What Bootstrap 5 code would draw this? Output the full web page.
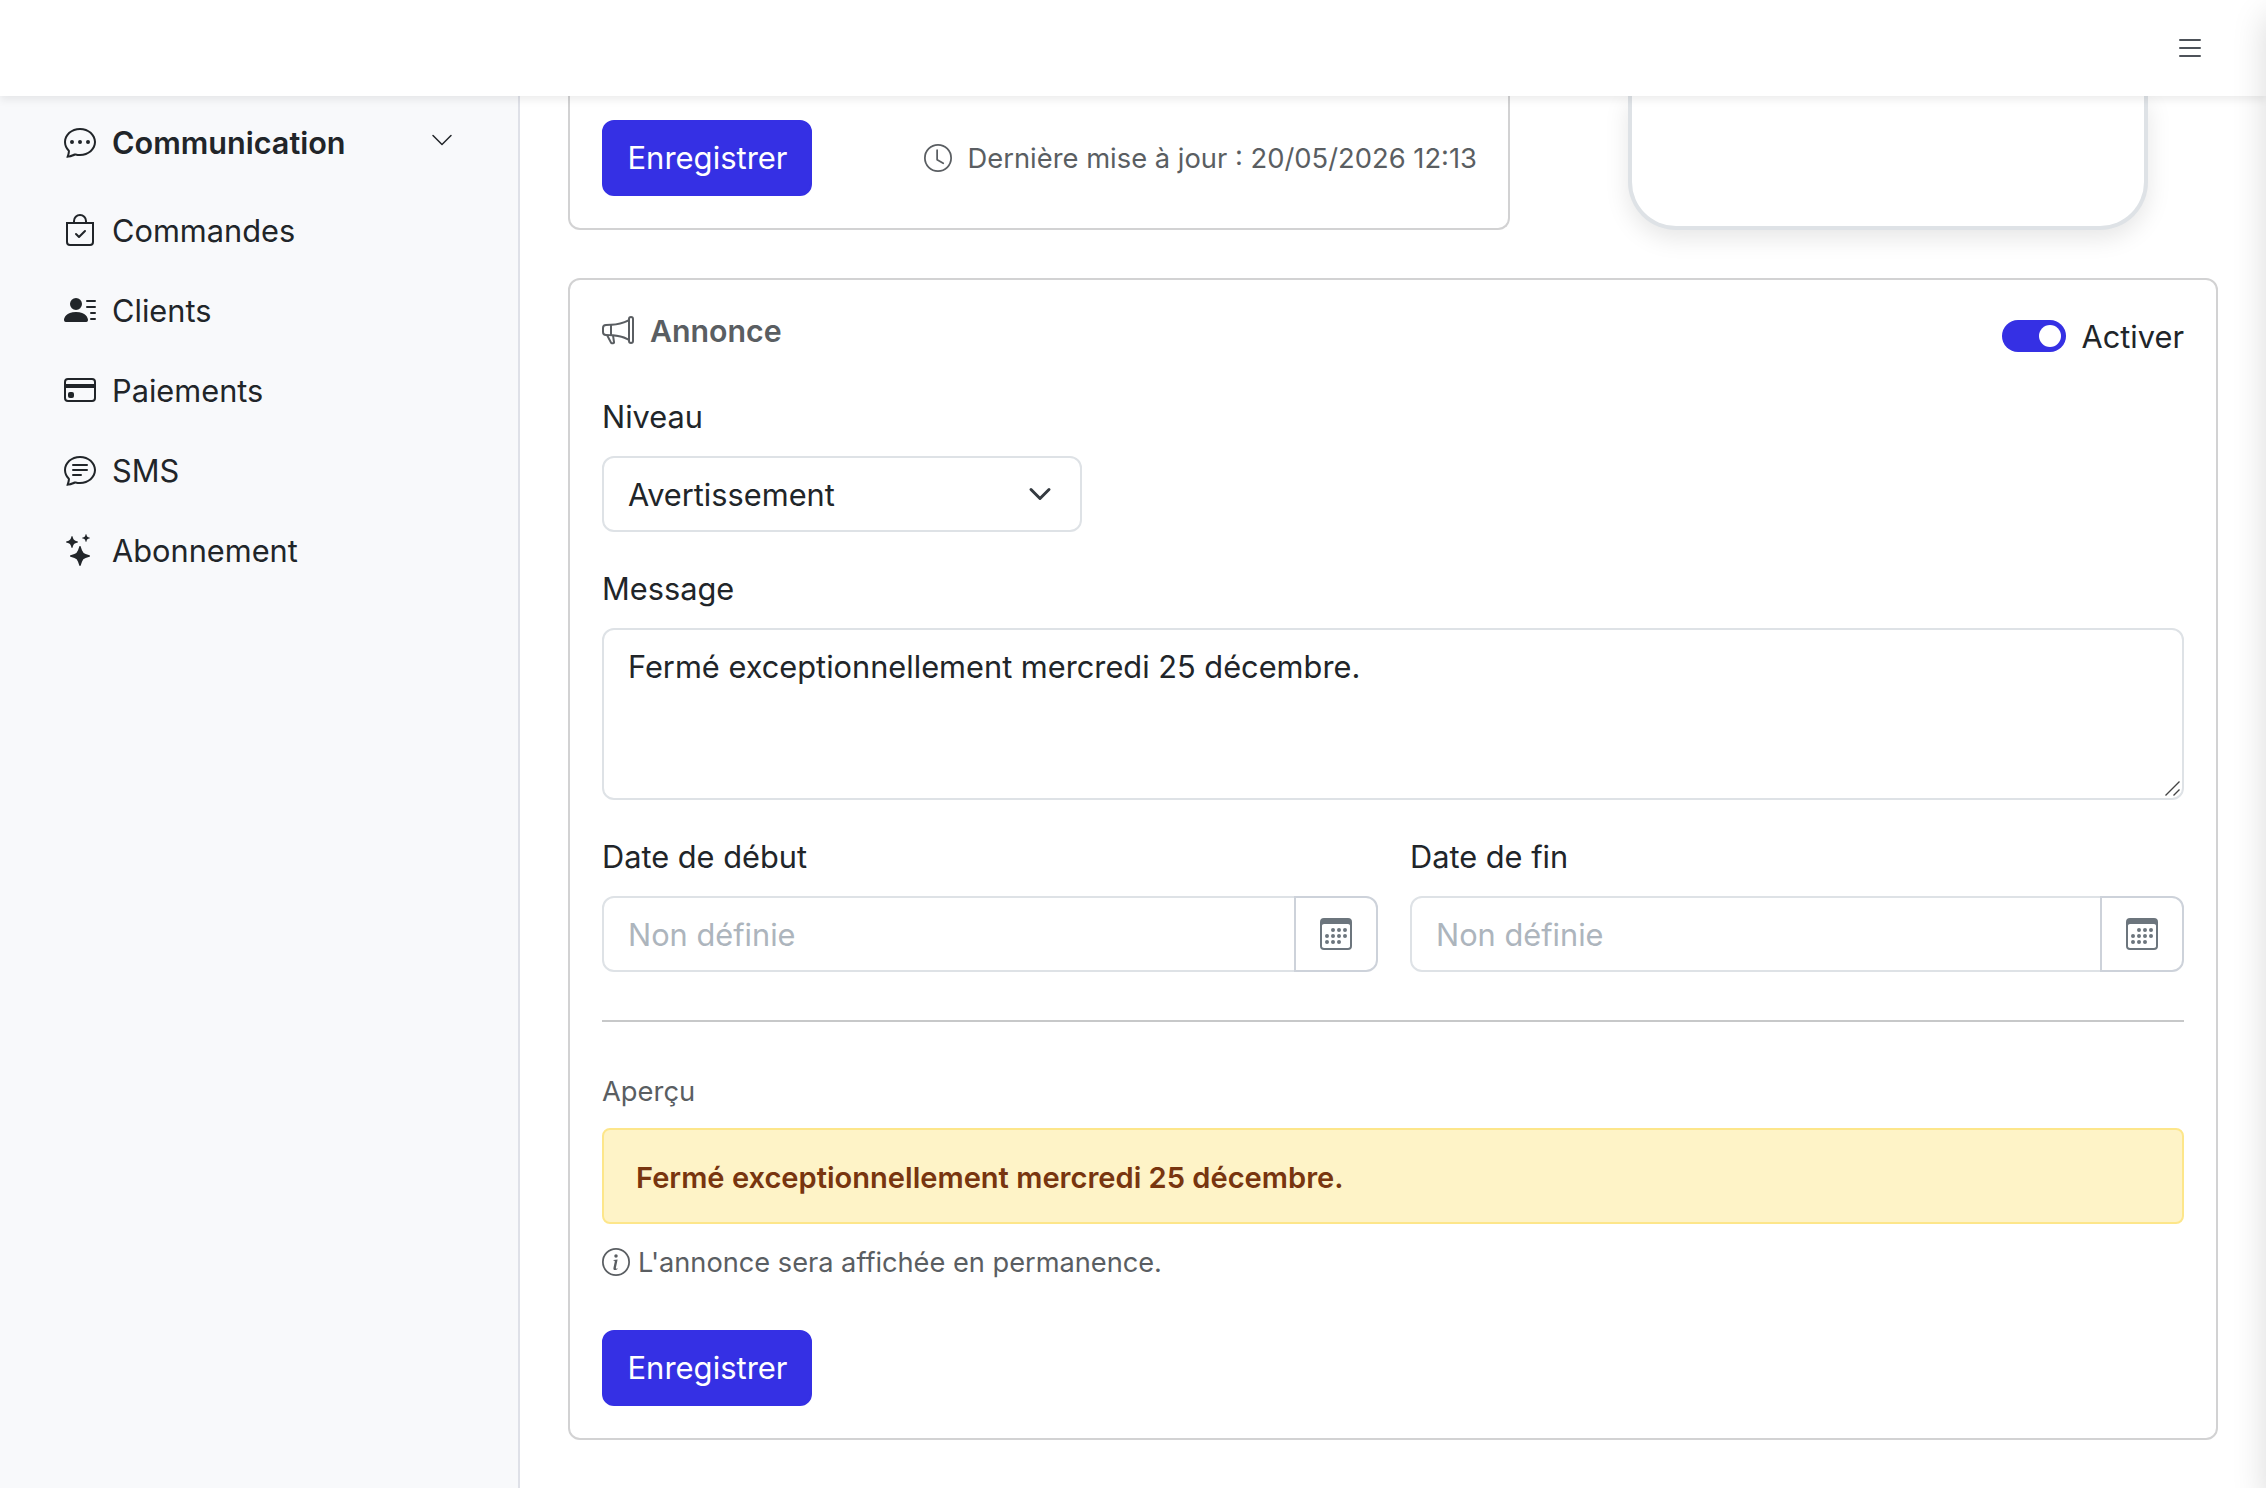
<!DOCTYPE html>
<html lang="fr">
<head>
<meta charset="utf-8">
<title>Annonce</title>
<link href="https://cdn.jsdelivr.net/npm/bootstrap@5.3.0/dist/css/bootstrap.min.css" rel="stylesheet">
<style>
:root{--brand:#3530e4;--text-size:30.75px}
html{font-size:32px}
body{font-family:Inter,"Liberation Sans",sans-serif;font-size:var(--text-size);line-height:1.5rem;overflow:hidden;height:1488px}
svg{fill:currentColor;flex:none;display:block}
.ic{width:32px;height:32px}
.ic-sm{width:28px;height:28px}
.t{padding-top:2px}
.topbar{height:96px;padding:0 60px;z-index:1030;box-shadow:0 4px 8px rgba(0,0,0,.075);color:#4d5259}
.shell{height:1392px}
.sidebar{width:520px;background:#f8f9fb;border-right:2px solid #dfe1e8;padding:6px 64px}
.side-item{height:80px;color:#212529;gap:16px}
.side-item.open{margin-bottom:8px;font-weight:600;font-size:30.6px}
.chev{width:24px;height:24px;margin-bottom:4px}
.content{padding:0 48px}
.panel{border:2px solid #d2d2d3;border-radius:12px;background:#fff;padding:32px}
.panel-top{width:942px;height:134px;border-top:0;border-radius:0 0 12px 12px;padding-top:24px}
.panel-main{margin-top:48px}
.phone{width:520px;height:134px;margin-right:70px;border:4px solid #dee2e6;border-top:0;border-radius:0 0 48px 48px;box-shadow:0 8px 24px rgba(0,0,0,.1)}
.btn-brand{--bs-btn-color:#fff;--bs-btn-bg:var(--brand);--bs-btn-border-color:var(--brand);border-width:2px;border-radius:12px;font-size:31px;line-height:46px;padding:13px 0 13px 1px;width:210px;height:76px}
.save{margin-top:46px;display:block}
.muted{color:#5a5e62}
.fine{font-size:27.35px;line-height:42px}
.stamp{height:76px;margin-right:-1px}
.preview-label{padding-top:2px;line-height:40px}
.head{height:80px}
.head-title{font-weight:600;font-size:30.3px;height:36px}
.toggle-label{line-height:46px}
.switch{width:64px;height:32px;border-radius:16px;background:var(--brand);padding:5px}
.knob{width:22px;height:22px;border-radius:50%;background:#fff}
.form-label{margin-bottom:16px;line-height:46px;display:block;width:max-content}
.form-control,.form-select{border:2px solid #dee2e6;border-radius:12px;font-size:var(--text-size);line-height:48px;padding:13px 24px 11px;color:#212529}
.form-control::placeholder{color:#adb5bd}
.form-select{width:480px;background-size:32px 24px;background-position:right 24px center}
textarea.form-control{resize:none;display:block;height:172px;overflow:hidden}
.grip{position:absolute;right:2px;bottom:3px;width:18px;height:18px}
.date-field{width:776px}
.date-field+.date-field{width:774px}
.cal{width:84px;border:2px solid #cdd2da;border-radius:12px;color:#6c757d;padding:0 24px;background:#fff}
.input-group>.cal{margin-left:-2px!important}
.rule{height:2px;background:#c7c8c9;margin:48px 0}
.notice{height:96px;background:#fef3c7;border:2px solid #fde68a;border-radius:8px;color:#78350f;font-weight:600;font-size:29.08px;padding:2px 32px 0}
.hint{font-size:27.23px;height:44px;gap:8px}
.hint .t{letter-spacing:-.02px}
.drawer{position:fixed;top:0;left:100%;width:600px;height:100%;z-index:1045;background:#fff;box-shadow:0 16px 32px rgba(0,0,0,.15)}
</style>
</head>
<body class="bg-white">
<nav class="topbar bg-white d-flex align-items-center justify-content-end position-relative">
  <svg class="ic" viewBox="0 0 16 16"><path d="M2.5 12a.5.5 0 0 1 .5-.5h10a.5.5 0 0 1 0 1H3a.5.5 0 0 1-.5-.5m0-4a.5.5 0 0 1 .5-.5h10a.5.5 0 0 1 0 1H3a.5.5 0 0 1-.5-.5m0-4a.5.5 0 0 1 .5-.5h10a.5.5 0 0 1 0 1H3a.5.5 0 0 1-.5-.5"/></svg>
</nav>
<div class="shell d-flex">
  <aside class="sidebar flex-shrink-0">
    <div class="side-item open d-flex align-items-center">
      <svg class="ic" viewBox="0 0 16 16"><path d="M5 8a1 1 0 1 1-2 0 1 1 0 0 1 2 0m4 0a1 1 0 1 1-2 0 1 1 0 0 1 2 0m3 1a1 1 0 1 0 0-2 1 1 0 0 0 0 2"/><path d="m2.165 15.803.02-.004c1.83-.363 2.948-.842 3.468-1.105A9 9 0 0 0 8 15c4.418 0 8-3.134 8-7s-3.582-7-8-7-8 3.134-8 7c0 1.76.743 3.37 1.97 4.6a10.4 10.4 0 0 1-.524 2.318l-.003.011a11 11 0 0 1-.244.637c-.079.186.074.394.273.362a22 22 0 0 0 .693-.125m.8-3.108a1 1 0 0 0-.287-.801C1.618 10.83 1 9.468 1 8c0-3.192 3.004-6 7-6s7 2.808 7 6-3.004 6-7 6a8 8 0 0 1-2.088-.272 1 1 0 0 0-.711.074c-.387.196-1.24.57-2.634.893a11 11 0 0 0 .398-2"/></svg>
      <span class="t me-auto">Communication</span>
      <svg class="chev" viewBox="0 0 16 16"><path d="M1.646 4.646a.5.5 0 0 1 .708 0L8 10.293l5.646-5.647a.5.5 0 0 1 .708.708l-6 6a.5.5 0 0 1-.708 0l-6-6a.5.5 0 0 1 0-.708"/></svg>
    </div>
    <div class="side-item d-flex align-items-center">
      <svg class="ic" viewBox="0 0 16 16"><path d="M10.854 8.146a.5.5 0 0 1 0 .708l-3 3a.5.5 0 0 1-.708 0l-1.5-1.5a.5.5 0 1 1 .708-.708L7.5 10.793l2.646-2.647a.5.5 0 0 1 .708 0"/><path d="M8 1a2.5 2.5 0 0 1 2.5 2.5V4h-5v-.5A2.5 2.5 0 0 1 8 1m3.5 3v-.5a3.5 3.5 0 1 0-7 0V4H1v10a2 2 0 0 0 2 2h10a2 2 0 0 0 2-2V4zM2 5h12v9a1 1 0 0 1-1 1H3a1 1 0 0 1-1-1z"/></svg>
      <span class="t">Commandes</span>
    </div>
    <div class="side-item d-flex align-items-center">
      <svg class="ic" viewBox="0 0 16 16"><path d="M6 8a3 3 0 1 0 0-6 3 3 0 0 0 0 6m-5 6s-1 0-1-1 1-4 6-4 6 3 6 4-1 1-1 1zM11 3.5a.5.5 0 0 1 .5-.5h4a.5.5 0 0 1 0 1h-4a.5.5 0 0 1-.5-.5m.5 2.5a.5.5 0 0 0 0 1h4a.5.5 0 0 0 0-1zm2 3a.5.5 0 0 0 0 1h2a.5.5 0 0 0 0-1zm0 3a.5.5 0 0 0 0 1h2a.5.5 0 0 0 0-1z"/></svg>
      <span class="t">Clients</span>
    </div>
    <div class="side-item d-flex align-items-center">
      <svg class="ic" viewBox="0 0 16 16"><path d="M0 4a2 2 0 0 1 2-2h12a2 2 0 0 1 2 2v8a2 2 0 0 1-2 2H2a2 2 0 0 1-2-2zm2-1a1 1 0 0 0-1 1v1h14V4a1 1 0 0 0-1-1zm13 4H1v5a1 1 0 0 0 1 1h12a1 1 0 0 0 1-1z"/><path d="M2 10a1 1 0 0 1 1-1h1a1 1 0 0 1 1 1v1a1 1 0 0 1-1 1H3a1 1 0 0 1-1-1z"/></svg>
      <span class="t">Paiements</span>
    </div>
    <div class="side-item d-flex align-items-center">
      <svg class="ic" viewBox="0 0 16 16"><path d="M2.678 11.894a1 1 0 0 1 .287.801 11 11 0 0 1-.398 2c1.395-.323 2.247-.697 2.634-.893a1 1 0 0 1 .71-.074A8 8 0 0 0 8 14c3.996 0 7-2.807 7-6s-3.004-6-7-6-7 2.808-7 6c0 1.468.617 2.83 1.678 3.894m-.493 3.905a22 22 0 0 1-.713.129c-.2.032-.352-.176-.273-.362a10 10 0 0 0 .244-.637l.003-.01c.248-.72.45-1.548.524-2.319C.743 11.37 0 9.76 0 8c0-3.866 3.582-7 8-7s8 3.134 8 7-3.582 7-8 7a9 9 0 0 1-2.347-.306c-.52.263-1.639.742-3.468 1.105"/><path d="M4 5.5a.5.5 0 0 1 .5-.5h7a.5.5 0 0 1 0 1h-7a.5.5 0 0 1-.5-.5M4 8a.5.5 0 0 1 .5-.5h7a.5.5 0 0 1 0 1h-7A.5.5 0 0 1 4 8m0 2.5a.5.5 0 0 1 .5-.5h4a.5.5 0 0 1 0 1h-4a.5.5 0 0 1-.5-.5"/></svg>
      <span class="t">SMS</span>
    </div>
    <div class="side-item d-flex align-items-center">
      <svg class="ic" viewBox="0 0 16 16"><path d="M7.657 6.247c.11-.33.576-.33.686 0l.645 1.937a2.89 2.89 0 0 0 1.829 1.828l1.936.645c.33.11.33.576 0 .686l-1.937.645a2.89 2.89 0 0 0-1.828 1.829l-.645 1.936a.361.361 0 0 1-.686 0l-.645-1.937a2.89 2.89 0 0 0-1.828-1.828l-1.937-.645a.361.361 0 0 1 0-.686l1.937-.645a2.89 2.89 0 0 0 1.828-1.828zM3.794 1.148a.217.217 0 0 1 .412 0l.387 1.162c.173.518.579.924 1.097 1.097l1.162.387a.217.217 0 0 1 0 .412l-1.162.387A1.73 1.73 0 0 0 4.593 5.69l-.387 1.162a.217.217 0 0 1-.412 0L3.407 5.69A1.73 1.73 0 0 0 2.31 4.593l-1.162-.387a.217.217 0 0 1 0-.412l1.162-.387A1.73 1.73 0 0 0 3.407 2.31zM10.863.099a.145.145 0 0 1 .274 0l.258.774c.115.346.386.617.732.732l.774.258a.145.145 0 0 1 0 .274l-.774.258a1.16 1.16 0 0 0-.732.732l-.258.774a.145.145 0 0 1-.274 0l-.258-.774a1.16 1.16 0 0 0-.732-.732L9.1 2.137a.145.145 0 0 1 0-.274l.774-.258c.346-.115.617-.386.732-.732z"/></svg>
      <span class="t">Abonnement</span>
    </div>
  </aside>
  <main class="content flex-grow-1">
    <div class="d-flex justify-content-between">
      <section class="panel panel-top d-flex align-items-start justify-content-between">
        <button class="btn btn-brand">Enregistrer</button>
        <div class="stamp muted fine d-flex align-items-center gap-2">
          <svg class="ic-sm" viewBox="0 0 16 16"><path d="M8 3.5a.5.5 0 0 0-1 0V9a.5.5 0 0 0 .252.434l3.5 2a.5.5 0 0 0 .496-.868L8 8.71z"/><path d="M8 16A8 8 0 1 0 8 0a8 8 0 0 0 0 16m7-8A7 7 0 1 1 1 8a7 7 0 0 1 14 0"/></svg>
          <span class="t">Dernière mise à jour : 20/05/2026 12:13</span>
        </div>
      </section>
      <div class="phone bg-white"></div>
    </div>
    <section class="panel panel-main">
      <div class="head d-flex justify-content-between align-items-start">
        <div class="head-title muted d-flex align-items-center gap-2">
          <svg class="ic" viewBox="0 0 16 16"><path d="M13 2.5a1.5 1.5 0 0 1 3 0v11a1.5 1.5 0 0 1-3 0v-.214c-2.162-1.241-4.49-1.843-6.912-2.083l.405 2.712A1 1 0 0 1 5.51 15.1h-.548a1 1 0 0 1-.916-.599l-1.85-3.49-.202-.003A2.014 2.014 0 0 1 0 9V7a2.02 2.02 0 0 1 1.992-2.013 75 75 0 0 0 2.483-.075c3.043-.154 6.148-.849 8.525-2.199zm1 0v11a.5.5 0 0 0 1 0v-11a.5.5 0 0 0-1 0m-1 1.35c-2.344 1.205-5.209 1.842-8 2.033v4.233q.27.015.537.036c2.568.189 5.093.744 7.463 1.993zm-9 6.215v-4.13a95 95 0 0 1-1.992.052A1.02 1.02 0 0 0 1 7v2c0 .55.448 1.002 1.006 1.009A61 61 0 0 1 4 10.065m-.657.975 1.609 3.037.01.024h.548l-.002-.014-.443-2.966a68 68 0 0 0-1.722-.082z"/></svg>
          <span class="t">Annonce</span>
        </div>
        <div class="d-flex align-items-center">
          <div class="switch d-flex justify-content-end me-2"><span class="knob"></span></div>
          <span class="t toggle-label">Activer</span>
        </div>
      </div>
      <label class="form-label t" for="niveau">Niveau</label>
      <select class="form-select" id="niveau"><option>Avertissement</option></select>
      <label class="form-label t mt-3" for="message">Message</label>
      <div class="position-relative">
        <textarea class="form-control" id="message" rows="3" spellcheck="false">Fermé exceptionnellement mercredi 25 décembre.</textarea>
        <svg class="grip" viewBox="0 0 18 18" fill="none" stroke="#444" stroke-width="1.4"><path d="M1.5 16.5 15.5 2.5M9.5 16.5 15.5 10.5"/></svg>
      </div>
      <div class="d-flex gap-3 mt-3">
        <div class="date-field">
          <label class="form-label t" for="debut">Date de début</label>
          <div class="input-group flex-nowrap">
            <input class="form-control" id="debut" placeholder="Non définie">
            <button class="btn cal" aria-label="Calendrier"><svg class="ic" viewBox="0 0 16 16"><path d="M14 0H2a2 2 0 0 0-2 2v12a2 2 0 0 0 2 2h12a2 2 0 0 0 2-2V2a2 2 0 0 0-2-2M1 3.857C1 3.384 1.448 3 2 3h12c.552 0 1 .384 1 .857v10.286c0 .473-.448.857-1 .857H2c-.552 0-1-.384-1-.857z"/><path d="M6.5 7a1 1 0 1 0 0-2 1 1 0 0 0 0 2m3 0a1 1 0 1 0 0-2 1 1 0 0 0 0 2m3 0a1 1 0 1 0 0-2 1 1 0 0 0 0 2m-9 3a1 1 0 1 0 0-2 1 1 0 0 0 0 2m3 0a1 1 0 1 0 0-2 1 1 0 0 0 0 2m3 0a1 1 0 1 0 0-2 1 1 0 0 0 0 2m3 0a1 1 0 1 0 0-2 1 1 0 0 0 0 2m-9 3a1 1 0 1 0 0-2 1 1 0 0 0 0 2m3 0a1 1 0 1 0 0-2 1 1 0 0 0 0 2m3 0a1 1 0 1 0 0-2 1 1 0 0 0 0 2"/></svg></button>
          </div>
        </div>
        <div class="date-field">
          <label class="form-label t" for="fin">Date de fin</label>
          <div class="input-group flex-nowrap">
            <input class="form-control" id="fin" placeholder="Non définie">
            <button class="btn cal" aria-label="Calendrier"><svg class="ic" viewBox="0 0 16 16"><path d="M14 0H2a2 2 0 0 0-2 2v12a2 2 0 0 0 2 2h12a2 2 0 0 0 2-2V2a2 2 0 0 0-2-2M1 3.857C1 3.384 1.448 3 2 3h12c.552 0 1 .384 1 .857v10.286c0 .473-.448.857-1 .857H2c-.552 0-1-.384-1-.857z"/><path d="M6.5 7a1 1 0 1 0 0-2 1 1 0 0 0 0 2m3 0a1 1 0 1 0 0-2 1 1 0 0 0 0 2m3 0a1 1 0 1 0 0-2 1 1 0 0 0 0 2m-9 3a1 1 0 1 0 0-2 1 1 0 0 0 0 2m3 0a1 1 0 1 0 0-2 1 1 0 0 0 0 2m3 0a1 1 0 1 0 0-2 1 1 0 0 0 0 2m3 0a1 1 0 1 0 0-2 1 1 0 0 0 0 2m-9 3a1 1 0 1 0 0-2 1 1 0 0 0 0 2m3 0a1 1 0 1 0 0-2 1 1 0 0 0 0 2m3 0a1 1 0 1 0 0-2 1 1 0 0 0 0 2"/></svg></button>
          </div>
        </div>
      </div>
      <div class="rule"></div>
      <div class="muted fine preview-label mb-2">Aperçu</div>
      <div class="notice d-flex align-items-center"><span class="t">Fermé exceptionnellement mercredi 25 décembre.</span></div>
      <div class="hint muted d-flex align-items-center mt-2">
        <svg class="ic-sm" viewBox="0 0 16 16"><path d="M8 15A7 7 0 1 1 8 1a7 7 0 0 1 0 14m0 1A8 8 0 1 0 8 0a8 8 0 0 0 0 16"/><path d="m8.93 6.588-2.29.287-.082.38.45.083c.294.07.352.176.288.469l-.738 3.468c-.194.897.105 1.319.808 1.319.545 0 1.178-.252 1.465-.598l.088-.416c-.2.176-.492.246-.686.246-.275 0-.375-.193-.304-.533zM9 4.5a1 1 0 1 1-2 0 1 1 0 0 1 2 0"/></svg>
        <span class="t">L'annonce sera affichée en permanence.</span>
      </div>
      <button class="btn btn-brand save">Enregistrer</button>
    </section>
  </main>
</div>
<div class="drawer"></div>
<script src="https://cdn.jsdelivr.net/npm/bootstrap@5.3.0/dist/js/bootstrap.bundle.min.js"></script>
</body>
</html>
